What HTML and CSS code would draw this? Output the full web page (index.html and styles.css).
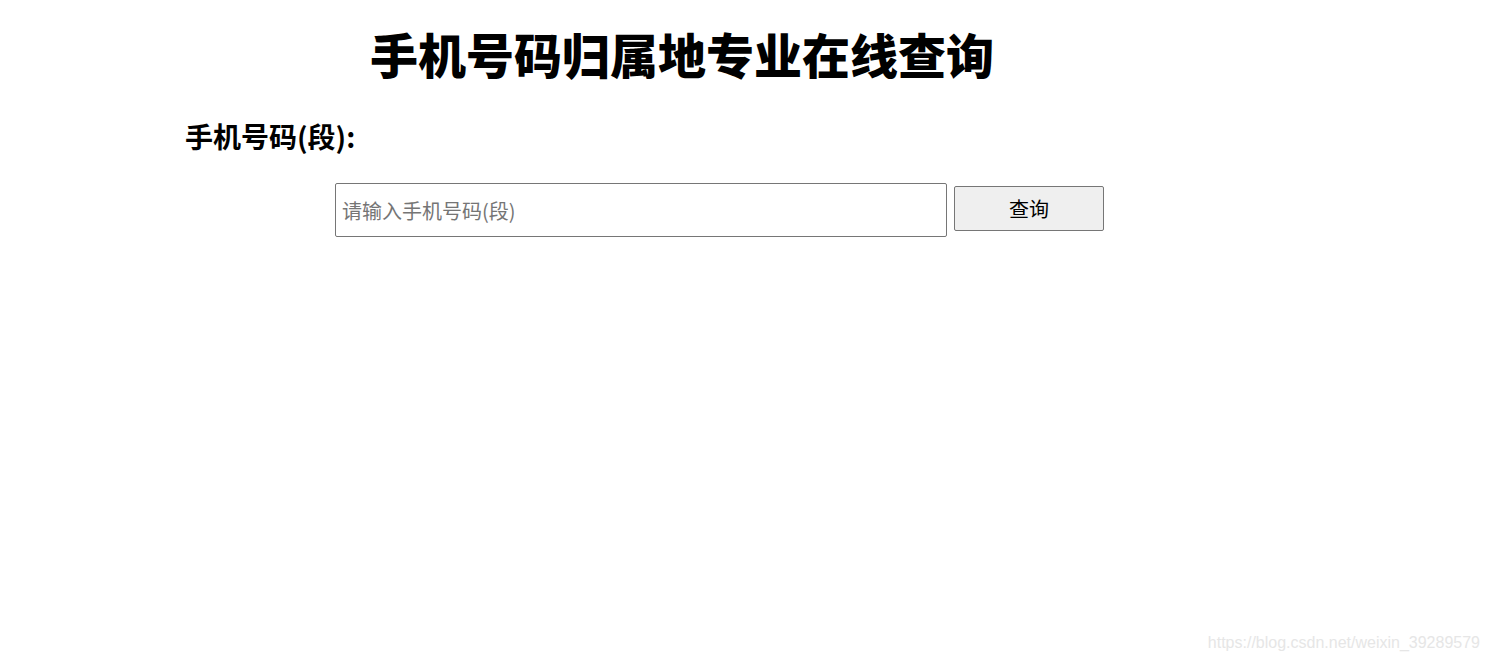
FILE: index.html
```html
<!DOCTYPE html>
<html lang="zh-CN">
<head>
<meta charset="utf-8">
<title>手机号码归属地专业在线查询</title>
<link rel="stylesheet" href="styles.css">
</head>
<body>
<div class="page">
  <h1 class="title">手机号码归属地专业在线查询</h1>
  <h2 class="label">手机号码(段):</h2>
  <form class="form-row">
    <input class="phone-input" type="text" placeholder="请输入手机号码(段)">
    <button class="query-btn" type="button">查询</button>
  </form>
</div>
<div class="watermark">https://blog.csdn.net/weixin_39289579</div>
</body>
</html>
```
FILE: styles.css
```css
html, body {
  margin: 0;
  padding: 0;
  background: #ffffff;
}
body {
  font-family: "Noto Sans CJK SC", "Noto Sans", sans-serif;
  color: #000;
  height: 662px;
  position: relative;
  overflow: hidden;
}
.page {
  margin-left: 185px;
  width: 994px;
  padding-top: 18px;
}
.title {
  margin: 0;
  text-align: center;
  font-size: 48px;
  font-weight: 900;
  line-height: 70px;
}
.label {
  margin: 28px 0 0 0;
  font-size: 28px;
  font-weight: 700;
  line-height: 40px;
}
.form-row {
  display: flex;
  align-items: flex-start;
  gap: 7px;
  margin: 27px 0 0 150px;
}
.phone-input {
  box-sizing: border-box;
  width: 612px;
  height: 54px;
  border: 1px solid #767676;
  border-radius: 2px;
  padding: 0 6px;
  font-family: "Noto Sans CJK SC", sans-serif;
  font-size: 20px;
  color: #000;
  outline: none;
}
.phone-input::placeholder {
  color: #757575;
}
.query-btn {
  box-sizing: border-box;
  width: 150px;
  height: 45px;
  margin-top: 3px;
  background: #efefef;
  border: 1px solid #767676;
  border-radius: 2px;
  font-family: "Noto Sans CJK SC", sans-serif;
  font-size: 20px;
  color: #000;
  padding: 0;
}
.watermark {
  position: absolute;
  right: 9px;
  bottom: 10px;
  font-family: "Liberation Sans", Arial, sans-serif;
  font-size: 16px;
  color: #e6e6e6;
}
```
